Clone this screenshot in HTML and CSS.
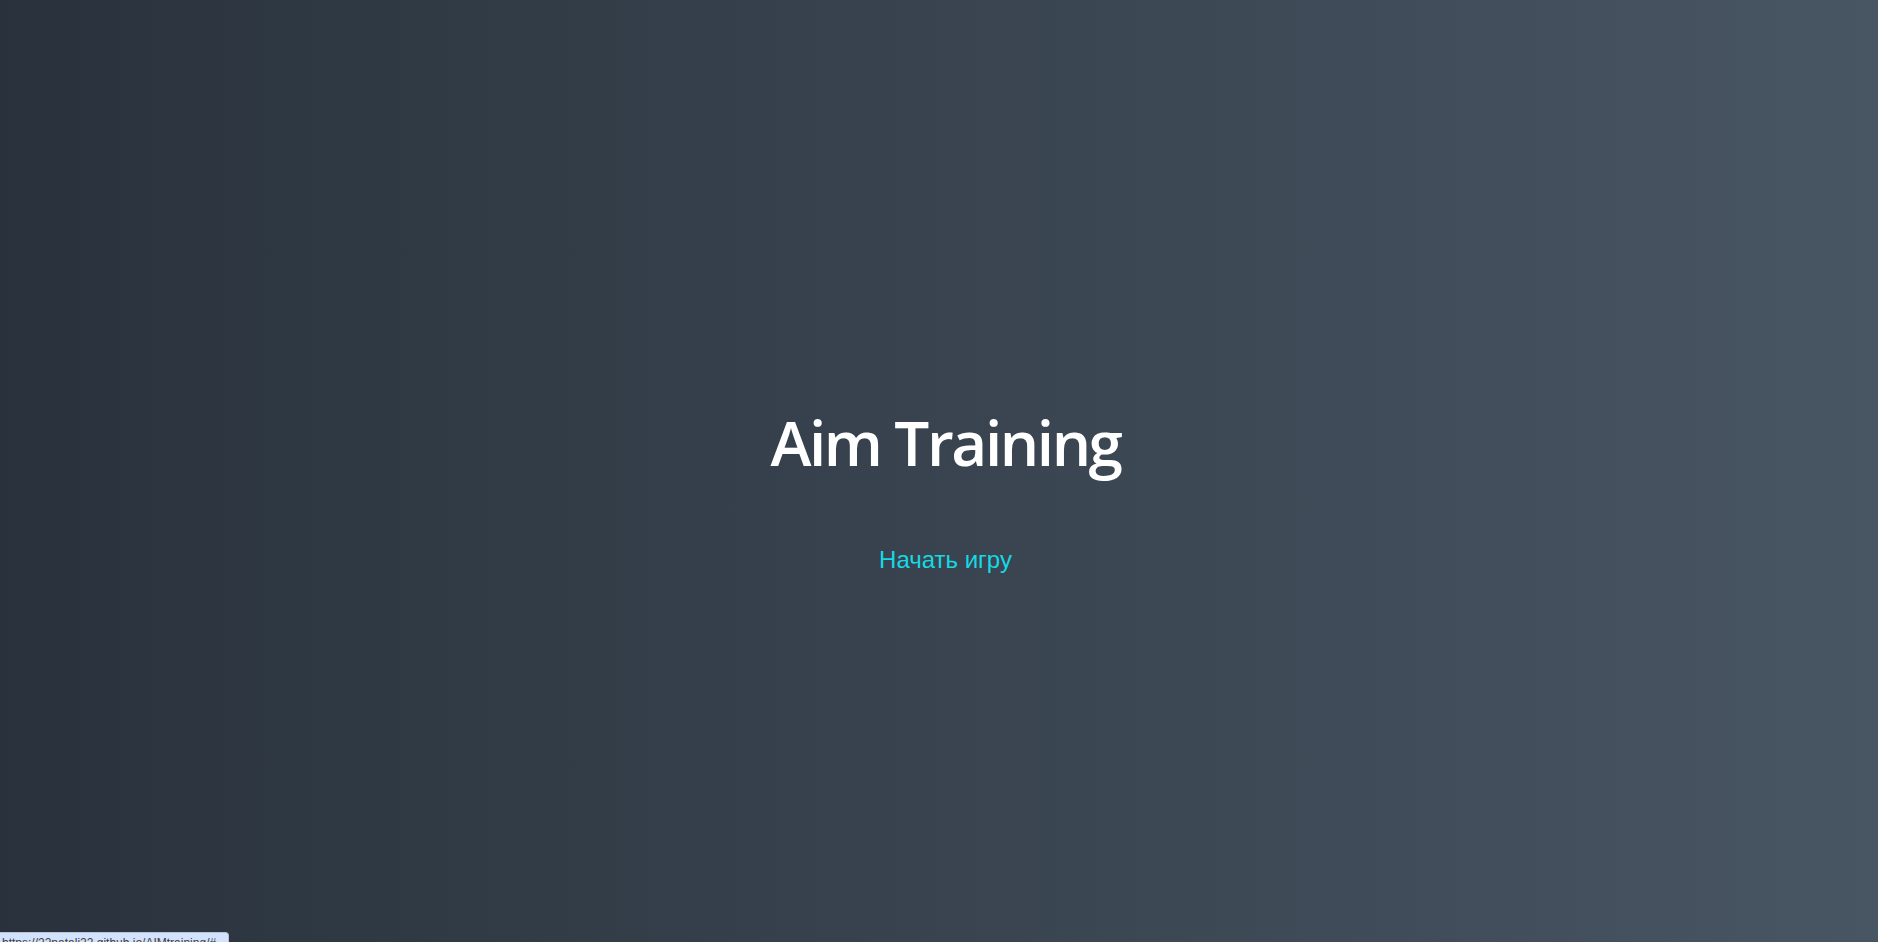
FILE: index.html
```html
<!DOCTYPE html>
<html lang="ru">
<head>
<meta charset="utf-8">
<title>Aim Training</title>
<link rel="stylesheet" href="styles.css">
</head>
<body>
<div class="screen">
  <h1 class="title">Aim Training</h1>
  <a href="#" class="start">Начать игру</a>
</div>
<div class="status">https://22natali22.github.io/AIMtraining/#</div>
</body>
</html>
```
FILE: styles.css
```css
* { box-sizing: border-box; }
html, body { margin: 0; padding: 0; height: 100%; }
body {
  background: linear-gradient(to right, #29323c, #485563);
  overflow: hidden;
  font-family: "Liberation Sans", Arial, sans-serif;
}
.screen {
  height: 100vh;
  display: flex;
  flex-direction: column;
  align-items: center;
  justify-content: center;
  padding: 43px 0 0 13px;
}
.title {
  margin: 0 0 73px;
  font-family: "Open Sans", sans-serif;
  font-weight: 600;
  font-size: 62px;
  letter-spacing: -2.4px;
  line-height: 1;
  color: #fff;
}
.start {
  font-size: 24px;
  color: #16d9e3;
  text-decoration: none;
}
.status {
  position: absolute;
  left: 0;
  bottom: 0;
  width: 229px;
  height: 10px;
  background: #d3e3fd;
  border: 1px solid #b8c4d6;
  border-bottom: none;
  border-left: none;
  border-radius: 0 4px 0 0;
  font-size: 12px;
  color: #3c4043;
  line-height: 1;
  padding: 4px 0 0 2px;
  overflow: hidden;
  white-space: nowrap;
}
```
